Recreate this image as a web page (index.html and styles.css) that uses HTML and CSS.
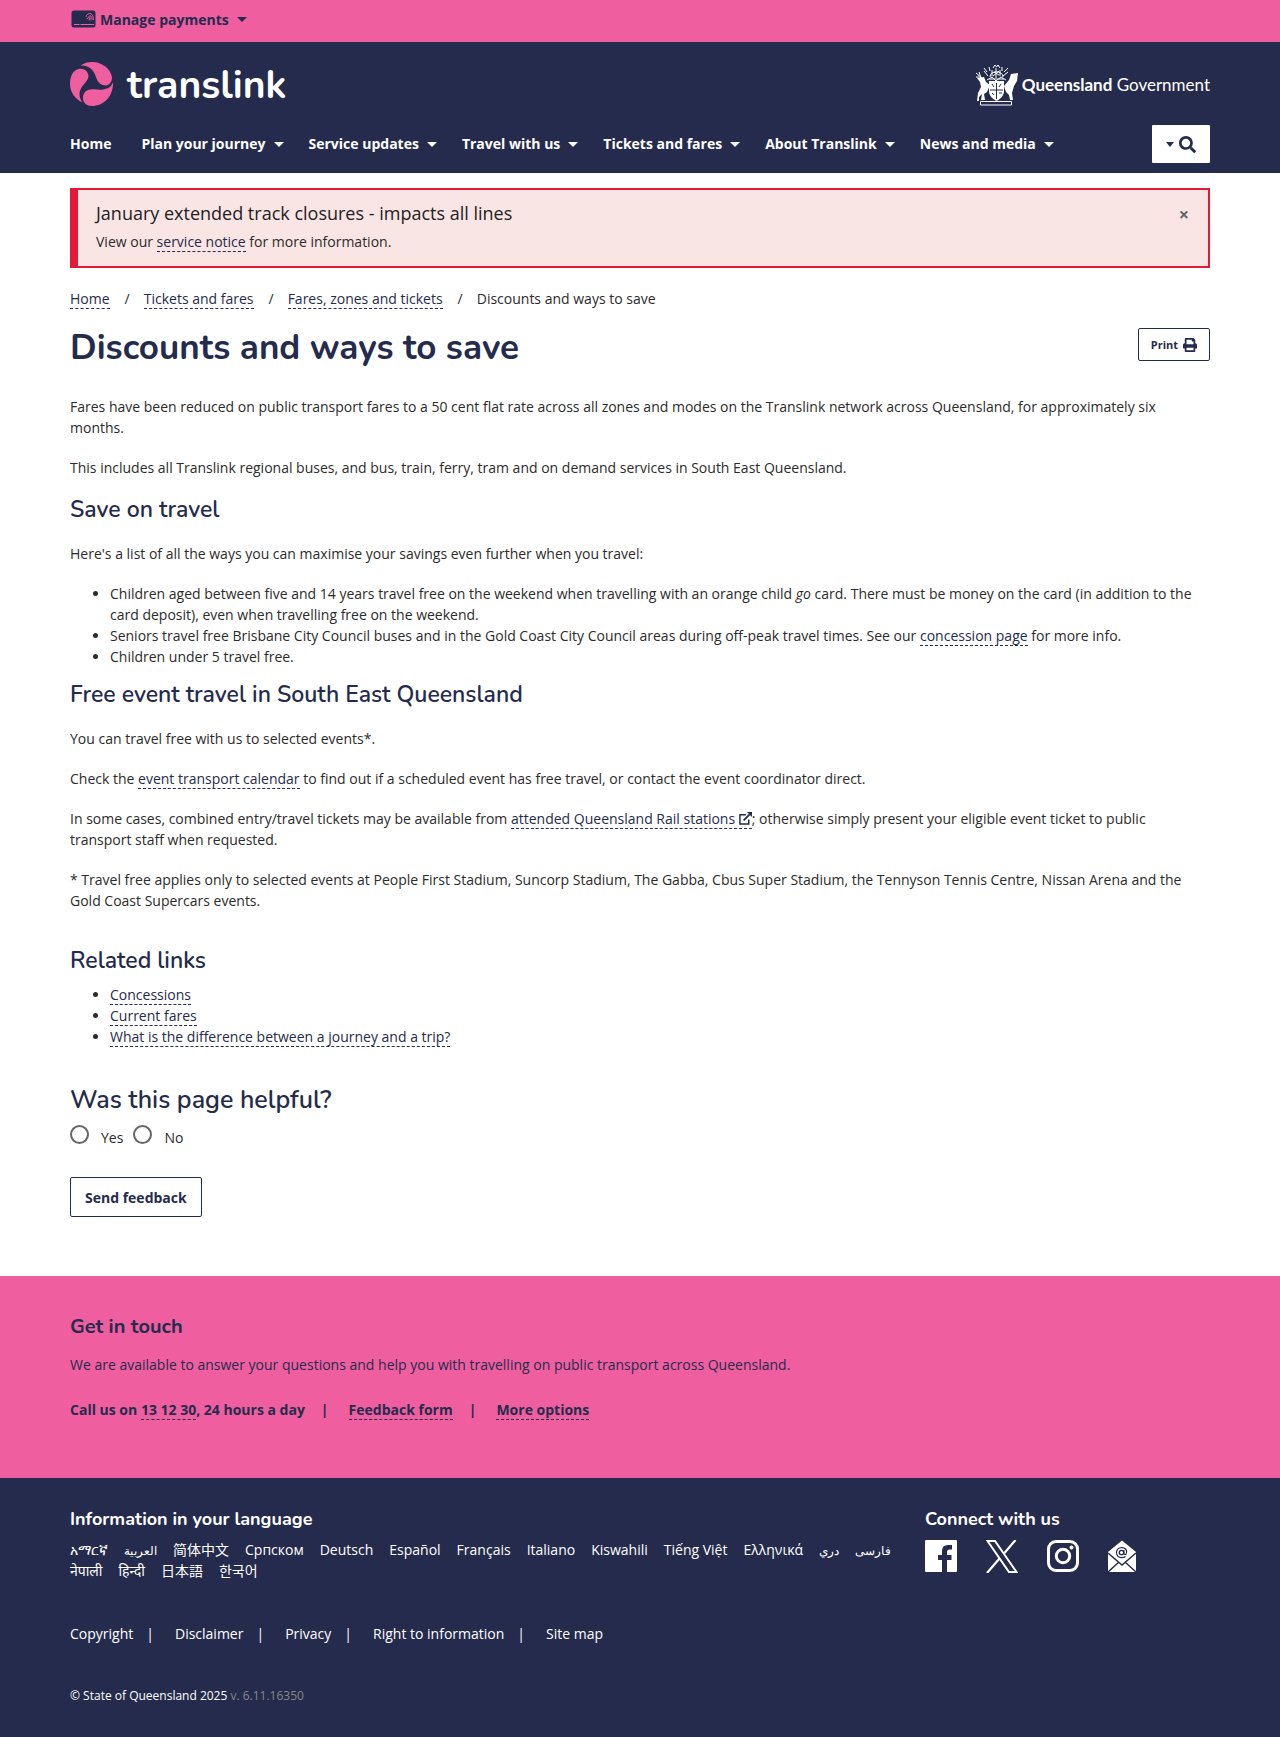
FILE: index.html
```html
<!DOCTYPE html>
<html lang="en">
<head>
<meta charset="utf-8">
<meta name="viewport" content="width=device-width, initial-scale=1">
<title>Discounts and ways to save | Translink</title>
<link rel="stylesheet" href="styles.css">
</head>
<body>
<div class="topbar">
  <div class="container">
    <button class="payments" type="button">
      <svg class="card-icon" width="25" height="18" viewBox="0 0 25 18" aria-hidden="true"><rect x="0.5" y="0.5" width="24" height="17" rx="2.5" fill="#252b4d"/><path d="M3 14.500H8.500M9.500 14.500H23" stroke="#ef5fa0" stroke-width="1"/><g fill="none" stroke="#ef5fa0" stroke-width="0.9"><path d="M15 7A4.500 4.500 0 0 1 20 3.500Q22.500 5 22.500 10"/><path d="M15.500 9Q17.500 8.500 17.500 7Q18.500 5 20 6Q21 7.500 21 10"/><path d="M17.500 10Q19 9.500 19 7.500V10.500"/></g></svg>
      <span>Manage payments</span><span class="caret"></span>
    </button>
  </div>
</div>
<header class="header">
  <div class="container">
    <div class="brand-row">
      <a class="brand" href="#">
        <svg width="43" height="44" viewBox="0 0 43 44" aria-hidden="true"><g fill="#ef5fa0"><path d="M9 7C14 6 18 9 18.500 14C18.500 20 9.500 24 9.500 32C9.500 35 10.500 38 12.500 40.500C5 37 0 30 0 22C0 16 2 8 9 7Z"/><path d="M10.500 3.500C14 1 18 0 22 0C32 0 41 7 42 15.500C42 20 39 23.500 35.500 23.500C27 23 27 16 24 10.500C21.500 6 17 3 10.500 3.500Z"/><path d="M43 20.500C43.500 34 34 44 22 44C16.500 44 13 40.500 13 36C13 30 17 27 24 27.300C33 28.500 40 27.500 43 20.500Z"/></g></svg>
        <span class="brand-name">translink</span>
      </a>
      <a class="gov" href="#">
        <svg width="44" height="42" viewBox="0 0 44 42" aria-hidden="true"><g fill="none" stroke="#fff" stroke-width="1"><path d="M5.500 37.500H36.500V41H5.500Z"/><path d="M12 8L9 4M9 7L13 12M15 7L14 3M29 8L33 4M33 8L28 12M27 7V3M18 4L20 1L21.500 3L23 1L25 4M15 13C15 6 28 6 28 13M17 6V12M25 6V12M21 4V14M19 8L24 11M24 7L18 12M14 15H29M12 16L17 13L21 17L26 13L31 16M1 9L7 14M4 8L6 14M1 13H6"/></g><path d="M2 14L9 13L11 18L15 21L12 28L9 30L10 36H6L7 30L4 33V37H2L3 29L6 23L5 18Z" fill="#fff"/><path d="M43 9L36 10L34 16L29 22L31 28L34 31L35 36H38L37 29L39 22L42 17Z" fill="#fff"/><path d="M14 17H29V28C28 33 25 35 21.500 37C18 35 15 33 14 28Z" fill="#fff"/><path d="M21.500 19V35M15 26H28M17 20L19 23M26 20L24 23M17 29L19 31M24 29H27" stroke="#252b4d" stroke-width="1"/></svg>
        <span><strong>Queensland</strong> Government</span>
      </a>
    </div>
    <div class="nav-row">
      <nav class="nav" aria-label="Main">
        <a class="home" href="#">Home</a>
        <a href="#">Plan your journey<span class="caret"></span></a>
        <a href="#">Service updates<span class="caret"></span></a>
        <a href="#">Travel with us<span class="caret"></span></a>
        <a href="#">Tickets and fares<span class="caret"></span></a>
        <a href="#">About Translink<span class="caret"></span></a>
        <a href="#">News and media<span class="caret"></span></a>
      </nav>
      <button class="search" type="button" aria-label="Search"><span class="caret"></span><svg width="17" height="17" viewBox="0 0 512 512" aria-hidden="true"><path fill="#252b4d" d="M505 442.700L405.300 343c-4.500-4.500-10.600-7-17-7H372c27.600-35.300 44-79.700 44-128C416 93.100 322.900 0 208 0S0 93.100 0 208s93.100 208 208 208c48.300 0 92.700-16.400 128-44v16.300c0 6.400 2.500 12.500 7 17l99.700 99.700c9.400 9.400 24.600 9.400 33.900 0l28.300-28.300c9.400-9.400 9.400-24.600.1-34zM208 336c-70.700 0-128-57.200-128-128 0-70.700 57.200-128 128-128 70.700 0 128 57.200 128 128 0 70.700-57.200 128-128 128z"/></svg></button>
    </div>
  </div>
</header>
<main class="container main">
  <section class="alert">
    <div>
      <h2>January extended track closures - impacts all lines</h2>
      <p>View our <a class="link" href="#">service notice</a> for more information.</p>
    </div>
    <button class="close" type="button" aria-label="Dismiss">×</button>
  </section>
  <nav aria-label="Breadcrumb">
    <ol class="crumbs">
      <li><a class="link" href="#">Home</a></li>
      <li><a class="link" href="#">Tickets and fares</a></li>
      <li><a class="link" href="#">Fares, zones and tickets</a></li>
      <li>Discounts and ways to save</li>
    </ol>
  </nav>
  <div class="title-row">
    <h1>Discounts and ways to save</h1>
    <button class="print" type="button">Print<svg width="14" height="14" viewBox="0 0 512 512" aria-hidden="true"><path fill="#252b4d" d="M448 192V77.250c0-8.490-3.370-16.620-9.370-22.630L393.370 9.370c-6-6-14.140-9.370-22.630-9.370H96C78.330 0 64 14.330 64 32v160c-35.350 0-64 28.650-64 64v112c0 8.840 7.160 16 16 16h48v96c0 17.670 14.330 32 32 32h320c17.670 0 32-14.330 32-32v-96h48c8.840 0 16-7.160 16-16V256c0-35.350-28.650-64-64-64zm-64 256H128v-96h256v96zm0-224H128V64h192v48c0 8.840 7.160 16 16 16h48v96z"/></svg></button>
  </div>
  <article class="content">
    <p>Fares have been reduced on public transport fares to a 50 cent flat rate across all zones and modes on the Translink network across Queensland, for approximately six months.</p>
    <p>This includes all Translink regional buses, and bus, train, ferry, tram and on demand services in South East Queensland.</p>
    <h2>Save on travel</h2>
    <p>Here's a list of all the ways you can maximise your savings even further when you travel:</p>
    <ul>
      <li>Children aged between five and 14 years travel free on the weekend when travelling with an orange child <em>go</em> card. There must be money on the card (in addition to the card deposit), even when travelling free on the weekend.</li>
      <li>Seniors travel free Brisbane City Council buses and in the Gold Coast City Council areas during off-peak travel times. See our <a class="link" href="#">concession page</a> for more info.</li>
      <li>Children under 5 travel free.</li>
    </ul>
    <h2>Free event travel in South East Queensland</h2>
    <p>You can travel free with us to selected events*.</p>
    <p>Check the <a class="link" href="#">event transport calendar</a> to find out if a scheduled event has free travel, or contact the event coordinator direct.</p>
    <p>In some cases, combined entry/travel tickets may be available from <a class="link" href="#">attended Queensland Rail stations <svg class="ext" width="13" height="13" viewBox="0 0 14 14" aria-hidden="true"><path d="M7.500 3H1V13H10.500V8" fill="none" stroke="#252b4d" stroke-width="1.600"/><path d="M5 9L11.500 2.500" stroke="#252b4d" stroke-width="2"/><path d="M8.500 0H14V5.500Z" fill="#252b4d"/></svg></a>; otherwise simply present your eligible event ticket to public transport staff when requested.</p>
    <p>* Travel free applies only to selected events at People First Stadium, Suncorp Stadium, The Gabba, Cbus Super Stadium, the Tennyson Tennis Centre, Nissan Arena and the Gold Coast Supercars events.</p>
  </article>
  <section class="related">
    <h2>Related links</h2>
    <ul>
      <li><a class="link" href="#">Concessions</a></li>
      <li><a class="link" href="#">Current fares</a></li>
      <li><a class="link" href="#">What is the difference between a journey and a trip?</a></li>
    </ul>
  </section>
  <form class="helpful">
    <fieldset>
      <legend>Was this page helpful?</legend>
      <div class="radios">
        <input type="radio" name="helpful" id="yes"><label for="yes">Yes</label>
        <input type="radio" name="helpful" id="no"><label for="no">No</label>
      </div>
    </fieldset>
    <button class="send" type="button">Send feedback</button>
  </form>
</main>
<section class="touch">
  <div class="container">
    <h2>Get in touch</h2>
    <p>We are available to answer your questions and help you with travelling on public transport across Queensland.</p>
    <ul class="contacts">
      <li>Call us on <a class="link" href="#">13 12 30</a>, 24 hours a day</li>
      <li><a class="link" href="#">Feedback form</a></li>
      <li><a class="link" href="#">More options</a></li>
    </ul>
  </div>
</section>
<footer class="footer">
  <div class="container">
    <div class="footer-top">
      <section class="languages">
        <h2>Information in your language</h2>
        <ul>
          <li><a href="#" lang="am">አማርኛ</a></li><li><a class="arabic" href="#" lang="ar">العربية</a></li><li><a href="#" lang="zh">简体中文</a></li><li><a href="#">Српском</a></li><li><a href="#">Deutsch</a></li><li><a href="#">Español</a></li><li><a href="#">Français</a></li><li><a href="#">Italiano</a></li><li><a href="#">Kiswahili</a></li><li><a href="#">Tiếng Việt</a></li><li><a href="#">Ελληνικά</a></li><li><a class="arabic" href="#" lang="prs">دري</a></li><li><a class="arabic" href="#" lang="fa">فارسی</a></li><li><a href="#" lang="ne">नेपाली</a></li><li><a href="#" lang="hi">हिन्दी</a></li><li><a href="#" lang="ja">日本語</a></li><li><a href="#" lang="ko">한국어</a></li>
        </ul>
      </section>
      <section class="connect">
        <h2>Connect with us</h2>
        <div class="social">
          <a href="#" aria-label="Facebook"><svg width="32" height="32" viewBox="0 0 32 32"><path fill="#fff" d="M1 0H31Q32 0 32 1V31Q32 32 31 32H22V20H26.500V15H22V12Q22 9.500 24.500 9.500H27V5H23Q17 5 17 11V15H13V20H17V32H1Q0 32 0 31V1Q0 0 1 0Z"/></svg></a>
          <a href="#" aria-label="X"><svg width="32" height="33" viewBox="0 0 32 33"><path d="M1.500 1H9L30.500 32H23Z" fill="none" stroke="#fff" stroke-width="2"/><path d="M29.500 0L18 13.500M13.500 18.500L1 33" stroke="#fff" stroke-width="2.200"/></svg></a>
          <a href="#" aria-label="Instagram"><svg width="32" height="32" viewBox="0 0 32 32" fill="none" stroke="#fff" stroke-width="3"><rect x="1.500" y="1.500" width="29" height="29" rx="7.500"/><circle cx="16" cy="16" r="6.700"/><circle cx="24.500" cy="7.500" r="2" fill="#fff" stroke="none"/></svg></a>
          <a href="#" aria-label="Email newsletter"><svg width="29" height="33" viewBox="1 0 29 33"><path d="M1 12L15 0.500L29 12V32H1Z" fill="#fff"/><path d="M1 13L15 25L29 13M1 32L12 22M29 32L18 22" fill="none" stroke="#252b4d" stroke-width="1.400"/><circle cx="14.500" cy="12.500" r="2.200" fill="none" stroke="#252b4d" stroke-width="1.300"/><path d="M16.900 10V13.500Q17.500 15 19 14.300Q20 12.500 19.500 10.500Q18 7.500 14.500 7.500Q9.700 8 9.500 12.500Q9.800 17.500 14.500 17.700Q17 17.700 18.500 16.500" fill="none" stroke="#252b4d" stroke-width="1.200"/></svg></a>
        </div>
      </section>
    </div>
    <ul class="legal">
      <li><a href="#">Copyright</a></li>
      <li><a href="#">Disclaimer</a></li>
      <li><a href="#">Privacy</a></li>
      <li><a href="#">Right to information</a></li>
      <li><a href="#">Site map</a></li>
    </ul>
    <p class="copyright">© State of Queensland 2025 <span>v. 6.11.16350</span></p>
  </div>
</footer>
</body>
</html>
```
FILE: styles.css
```css
:root {
  --navy: #252b4d;
  --pink: #ef5fa0;
  --heading: Nunito, Lato, sans-serif;
}
* { box-sizing: border-box; }
body {
  margin: 0;
  background: #fff;
  color: #2b2b2b;
  font: 14px/21px "Open Sans", "Noto Sans", "Noto Sans CJK SC", sans-serif;
}
h1, h2, p, ul, ol, fieldset { margin: 0; padding: 0; }
button { font: inherit; color: var(--navy); cursor: pointer; }
svg { display: block; flex: none; }
.container { max-width: 1170px; margin: 0 auto; padding: 0 15px; }
.caret {
  display: inline-block;
  border: 5px solid transparent;
  border-top-color: currentColor;
  border-bottom: 0;
}
.link { color: var(--navy); text-decoration: none; border-bottom: 1px dashed var(--navy); }

.topbar { background: var(--pink); }
.payments {
  display: flex;
  align-items: center;
  height: 42px;
  padding: 0 0 4px 1px;
  gap: 4px;
  border: 0;
  background: none;
  font-weight: 700;
}
.payments .caret { margin-left: 4px; }

.header { background: var(--navy); color: #fff; padding: 20px 0 10px; }
.header a { color: #fff; text-decoration: none; }
.brand-row { display: flex; justify-content: space-between; align-items: center; }
.brand { display: flex; align-items: center; gap: 14px; height: 44px; }
.brand-name { padding-top: 3px; font: 700 39px/44px var(--heading); }
.gov { display: flex; align-items: center; gap: 3px; padding-top: 1px; font: 17px/24px Lato, sans-serif; }
.nav-row { display: flex; justify-content: space-between; margin-top: 19px; }
.nav { display: flex; align-items: center; gap: 25px; padding-bottom: 2px; font-weight: 700; }
.nav .home { margin-right: 5px; }
.nav .caret { margin: 0 0 2px 8px; }
.search {
  display: flex;
  align-items: center;
  justify-content: center;
  gap: 5px;
  width: 58px;
  height: 38px;
  border: 0;
  border-radius: 1px;
  background: #fff;
}
.search .caret { border-width: 5px 4px 0; }

.alert {
  display: flex;
  justify-content: space-between;
  align-items: flex-start;
  margin-top: 15px;
  padding: 11px 19px 14px 18px;
  border: 2px solid #e41937;
  border-left-width: 8px;
  background: #f9e5e4;
}
.close { padding: 0; border: 0; background: none; color: #666; font-size: 18px; font-weight: 700; line-height: 26px; }
.crumbs { display: flex; margin-top: 20px; list-style: none; }
.crumbs li + li::before { content: "/"; padding: 0 14px 0 15px; }
.title-row { display: flex; justify-content: space-between; align-items: flex-start; margin-top: 19px; }
h1, h2, legend { color: var(--navy); font-family: var(--heading); font-weight: 600; }
.alert h2 { margin-bottom: 6px; color: #222; font-family: inherit; font-size: 18px; font-weight: 400; line-height: 24px; }
h1 { font-size: 35px; font-weight: 700; line-height: 40px; }
.print {
  display: flex;
  align-items: center;
  gap: 5px;
  height: 33px;
  padding: 0 12px;
  border: 1px solid var(--navy);
  border-radius: 2px;
  background: #fff;
  font-size: 11px;
  font-weight: 700;
}
.content { margin-top: 28px; }
.content p { margin-bottom: 19px; }
.content h2, .related h2 { margin-bottom: 20px; font-size: 23px; line-height: 26px; }
.content ul, .related ul { padding-left: 40px; }
.content ul { margin-bottom: 15px; }
.ext { display: inline-block; vertical-align: -1px; }
.related { margin-top: 37px; }
.related h2 { margin-bottom: 10px; }
.helpful { margin-top: 38px; }
fieldset { border: 0; min-width: 0; }
legend { padding: 0; font-size: 25px; line-height: 30px; }
.radios { display: flex; align-items: flex-start; margin-top: 10px; }
.radios input {
  appearance: none;
  width: 19px;
  height: 19px;
  margin: 0;
  border: 2px solid #666;
  border-radius: 50%;
  background: #fff;
}
.radios input:checked { background: radial-gradient(var(--navy) 45%, #fff 50%); }
.radios label { margin: 2px 10px 0 12px; }
.send {
  height: 40px;
  margin-top: 29px;
  padding: 0 14px;
  border: 1px solid var(--navy);
  border-radius: 2px;
  background: #fff;
  font-weight: 700;
}

.touch { margin-top: 59px; padding: 38px 0 58px; background: var(--pink); color: var(--navy); }
.touch h2 { margin-bottom: 14px; font-size: 20px; font-weight: 700; line-height: 26px; }
.contacts { display: flex; margin-top: 24px; list-style: none; font-weight: 700; }
.contacts li + li::before { content: "|"; padding: 0 20px 0 16px; }

.footer { padding: 29px 0 31px; background: var(--navy); color: #fff; }
.footer a { color: #fff; text-decoration: none; }
.footer h2 { color: #fff; font-size: 18px; font-weight: 700; line-height: 24px; }
.footer-top { display: grid; grid-template-columns: 3fr 1fr; }
.languages ul { display: flex; flex-wrap: wrap; gap: 0 16px; margin-top: 8px; padding-right: 20px; list-style: none; }
.languages li { height: 21px; }
.languages .arabic { font-size: 12px; }
.social { display: flex; gap: 29px; margin-top: 9px; }
.legal { display: flex; margin-top: 42px; list-style: none; }
.legal li + li::before { content: "|"; padding: 0 21px 0 13px; }
.copyright { margin-top: 41px; font-size: 12px; }
.copyright span { color: #888; }
```
